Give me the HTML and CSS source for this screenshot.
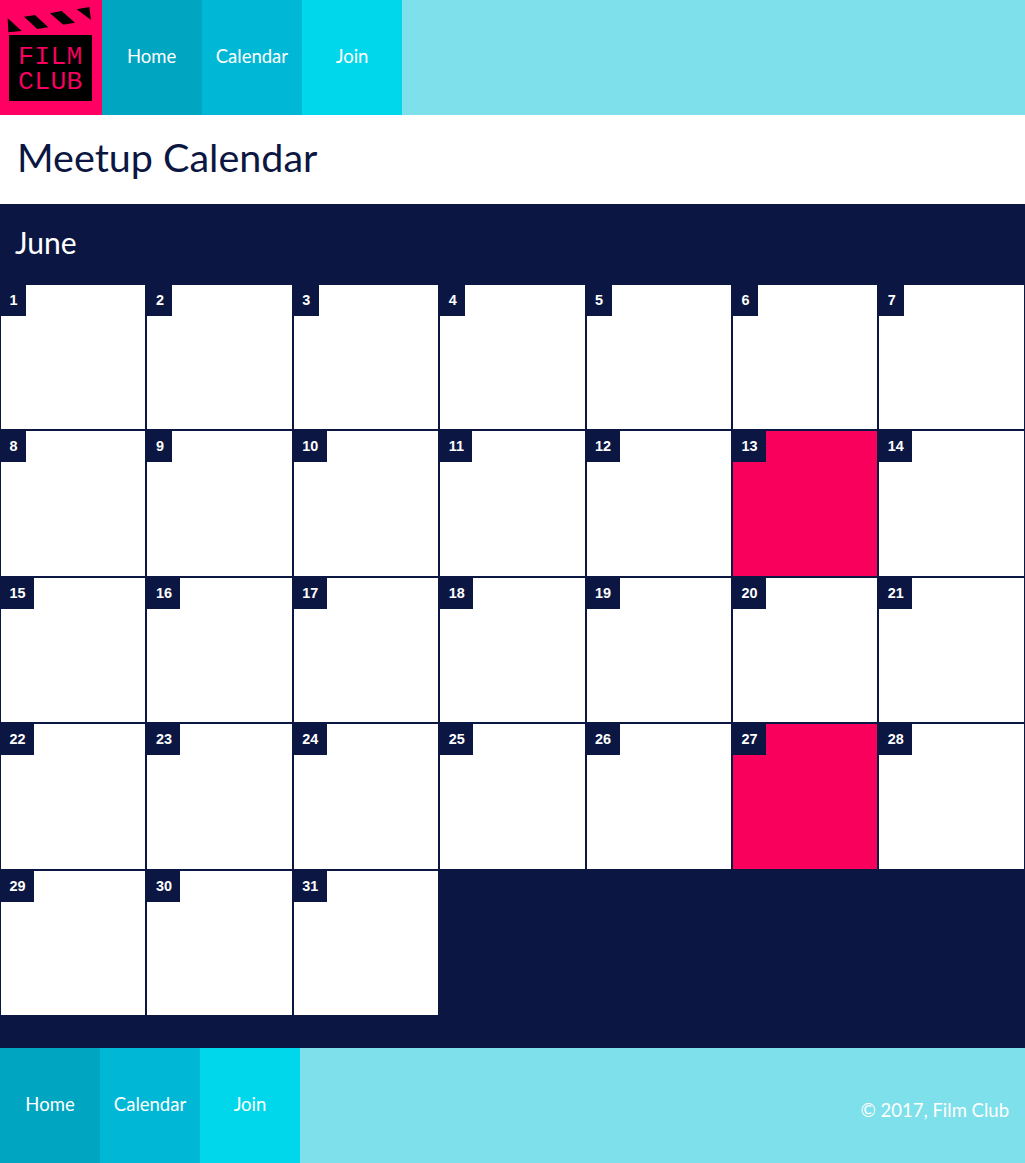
FILE: index.html
```html
<!DOCTYPE html>
<html lang="en">
<head>
<meta charset="utf-8">
<title>Meetup Calendar</title>
<link rel="stylesheet" href="styles.css">
</head>
<body>
<header class="bar">
  <a class="logo" href="#">
    <svg class="logo-art" width="101" height="115" viewBox="0 0 101 115">
      <polygon points="7.7,18.3 21.7,31 8.3,32.3"/>
      <polygon points="24,16.7 35,15 48.3,27.3 37.3,29"/>
      <polygon points="50,13.3 61.7,11 75,22.7 63.3,24.7"/>
      <polygon points="76.7,9.3 89.3,7 91,20"/>
      <rect x="9" y="35" width="83" height="66"/>
      <text class="logo-text" x="18" y="64">FILM</text>
      <text class="logo-text" x="18" y="89">CLUB</text>
    </svg>
  </a>
  <nav class="nav nav-top">
    <a class="nav-item c1" href="#">Home</a>
    <a class="nav-item c2" href="#">Calendar</a>
    <a class="nav-item c3" href="#">Join</a>
  </nav>
</header>
<h1 class="title">Meetup Calendar</h1>
<main class="month">
  <h2 class="month-name">June</h2>
  <div class="grid">
    <div class="day"><span class="num">1</span></div>
    <div class="day"><span class="num">2</span></div>
    <div class="day"><span class="num">3</span></div>
    <div class="day"><span class="num">4</span></div>
    <div class="day"><span class="num">5</span></div>
    <div class="day"><span class="num">6</span></div>
    <div class="day"><span class="num">7</span></div>
    <div class="day"><span class="num">8</span></div>
    <div class="day"><span class="num">9</span></div>
    <div class="day"><span class="num">10</span></div>
    <div class="day"><span class="num">11</span></div>
    <div class="day"><span class="num">12</span></div>
    <div class="day event"><span class="num">13</span></div>
    <div class="day"><span class="num">14</span></div>
    <div class="day"><span class="num">15</span></div>
    <div class="day"><span class="num">16</span></div>
    <div class="day"><span class="num">17</span></div>
    <div class="day"><span class="num">18</span></div>
    <div class="day"><span class="num">19</span></div>
    <div class="day"><span class="num">20</span></div>
    <div class="day"><span class="num">21</span></div>
    <div class="day"><span class="num">22</span></div>
    <div class="day"><span class="num">23</span></div>
    <div class="day"><span class="num">24</span></div>
    <div class="day"><span class="num">25</span></div>
    <div class="day"><span class="num">26</span></div>
    <div class="day event"><span class="num">27</span></div>
    <div class="day"><span class="num">28</span></div>
    <div class="day"><span class="num">29</span></div>
    <div class="day"><span class="num">30</span></div>
    <div class="day"><span class="num">31</span></div>
  </div>
</main>
<footer class="bar footer">
  <nav class="nav">
    <a class="nav-item c1 narrow" href="#">Home</a>
    <a class="nav-item c2 narrow" href="#">Calendar</a>
    <a class="nav-item c3 narrow" href="#">Join</a>
  </nav>
  <p class="copy">© 2017, Film Club</p>
</footer>
</body>
</html>
```
FILE: styles.css
```css
* { box-sizing: border-box; }
html, body { margin: 0; padding: 0; }
body {
  background: #fff;
  color: #0b1742;
  font-family: Lato, "Open Sans", sans-serif;
}
.bar {
  display: flex;
  height: 115px;
  background: #7de0ea;
}
.logo {
  display: block;
  flex: 0 0 101.6px;
  background: #ff0062;
}
.logo-art { display: block; }
.logo-text {
  fill: #ff0062;
  stroke: #000;
  stroke-width: 0.2px;
  font-family: "Liberation Mono", monospace;
  font-size: 26.5px;
  letter-spacing: 0.3px;
}
.nav { display: flex; }
.nav-item {
  display: flex;
  align-items: center;
  justify-content: center;
  width: 100.2px;
  padding-bottom: 3px;
  color: #fff;
  font-size: 18.5px;
  text-decoration: none;
}
.nav-item.narrow { width: 100px; }
.c1 { background: #00a5c1; }
.c2 { background: #00b8d6; }
.c3 { background: #00d7ea; }
.title {
  margin: 0;
  height: 89px;
  padding: 14px 17px 0;
  font-size: 39.5px;
  line-height: 56px;
  font-weight: 400;
}
.month {
  background: #0b1742;
  padding-bottom: 32px;
}
.month-name {
  margin: 0;
  height: 80px;
  padding: 17px 15px 0;
  color: #fff;
  font-size: 30px;
  line-height: 43px;
  font-weight: 400;
}
.grid {
  display: grid;
  grid-template-columns: repeat(6, 146.4px) 1fr;
  grid-auto-rows: 146.4px;
}
.day {
  position: relative;
  background: #fff;
  border: 1px solid #0b1742;
}
.day.event { background: #f8005b; }
.num {
  position: absolute;
  top: 0;
  left: 0;
  padding: 7px 8.5px 8px;
  background: #0b1742;
  color: #fff;
  font-family: "Liberation Sans", Arial, sans-serif;
  font-size: 14.4px;
  line-height: 16px;
  font-weight: 700;
}
.footer { justify-content: space-between; }
.copy {
  margin: 0;
  padding: 50px 16px 0 0;
  color: #fff;
  font-size: 18.5px;
  line-height: 24px;
}
```
